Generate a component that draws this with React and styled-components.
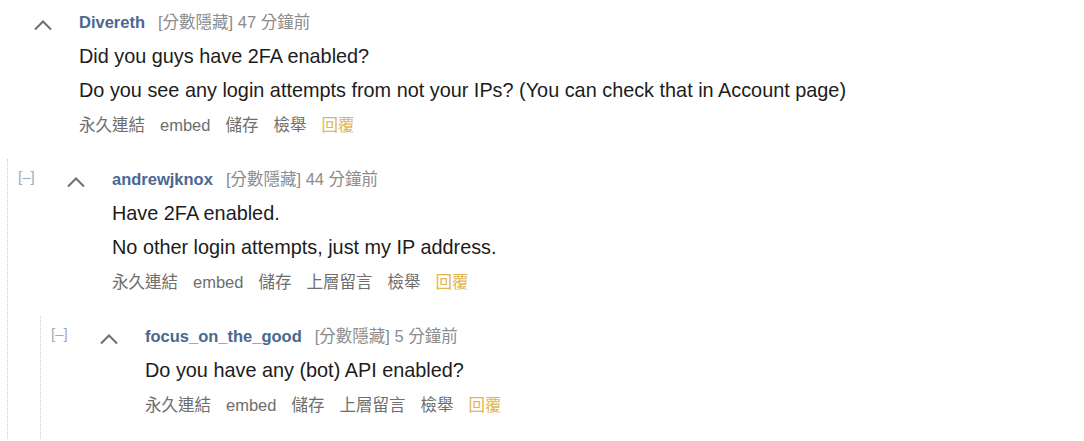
import React from "react";
import styled, { createGlobalStyle } from "styled-components";

const GlobalStyle = createGlobalStyle`
  html, body {
    margin: 0;
    padding: 0;
    background: #fff;
    overflow: hidden;
  }
  body {
    font-family: "Liberation Sans", "Noto Sans CJK TC", Arial, sans-serif;
  }
`;

const comments = [
  {
    id: 1,
    author: "Divereth",
    age: "47 分鐘前",
    body: [
      "Did you guys have 2FA enabled?",
      "Do you see any login attempts from not your IPs? (You can check that in Account page)",
    ],
    buttons: ["永久連結", "embed", "儲存", "檢舉"],
    replies: [
      {
        id: 2,
        author: "andrewjknox",
        age: "44 分鐘前",
        body: ["Have 2FA enabled.", "No other login attempts, just my IP address."],
        buttons: ["永久連結", "embed", "儲存", "上層留言", "檢舉"],
        replies: [
          {
            id: 3,
            author: "focus_on_the_good",
            age: "5 分鐘前",
            body: ["Do you have any (bot) API enabled?"],
            buttons: ["永久連結", "embed", "儲存", "上層留言", "檢舉"],
            replies: [],
          },
        ],
      },
    ],
  },
];

const Comment = ({ comment, depth = 0 }) => (
  <CommentBox>
    <Row>
      <Toggle $hidden={depth === 0}>[–]</Toggle>
      <Vote>
        <svg width="20" height="12" viewBox="0 0 20 12">
          <path d="M2 10.5 L10 2.5 L18 10.5" fill="none" stroke="#6f6f6f" strokeWidth="2" />
        </svg>
      </Vote>
      <Entry>
        <Tagline>
          <Author>{comment.author}</Author>
          <Meta>[分數隱藏] {comment.age}</Meta>
        </Tagline>
        {comment.body.map((line) => (
          <Paragraph key={line}>{line}</Paragraph>
        ))}
        <Buttons>
          {comment.buttons.map((b) => (
            <ActionLink key={b}>{b}</ActionLink>
          ))}
          <ActionLink $reply>回覆</ActionLink>
        </Buttons>
      </Entry>
    </Row>
    {comment.replies.length > 0 && (
      <Children>
        {comment.replies.map((r) => (
          <Comment key={r.id} comment={r} depth={depth + 1} />
        ))}
      </Children>
    )}
  </CommentBox>
);

export default function App() {
  return (
    <>
      <GlobalStyle />
      <Thread>
        {comments.map((c) => (
          <Comment key={c.id} comment={c} />
        ))}
      </Thread>
    </>
  );
}

const Thread = styled.div`
  margin-left: -15px;
  padding-top: 2px;
`;

const CommentBox = styled.div`
  display: flex;
  flex-direction: column;
`;

const Row = styled.div`
  display: flex;
  padding-top: 3px;
  padding-bottom: 17px;
`;

const Toggle = styled.div`
  width: 47px;
  flex-shrink: 0;
  font-size: 15px;
  line-height: 30px;
  color: #9eabbd;
  visibility: ${(p) => (p.$hidden ? "hidden" : "visible")};
`;

const Vote = styled.div`
  width: 47px;
  flex-shrink: 0;
  padding-top: 12px;
  padding-left: 1px;
  box-sizing: border-box;
`;

const Entry = styled.div`
  display: flex;
  flex-direction: column;
`;

const Tagline = styled.div`
  display: flex;
  align-items: center;
  gap: 13px;
  height: 34px;
  font-size: 16.5px;
  line-height: 20px;
`;

const Author = styled.span`
  font-weight: bold;
  color: #4a6791;
`;

const Meta = styled.span`
  color: #8c8c8c;
`;

const Paragraph = styled.p`
  margin: 0;
  font-size: 19.85px;
  line-height: 34px;
  color: #1c1c1c;
`;

const Buttons = styled.div`
  display: flex;
  gap: 15px;
  height: 35px;
  align-items: center;
  font-size: 16.5px;
  line-height: 20px;
`;

const ActionLink = styled.span`
  color: ${(p) => (p.$reply ? "#e2b654" : "#6e6e6e")};
`;

const Children = styled.div`
  margin-left: 22px;
  padding-left: 10px;
  border-left: 1px dotted #cfcfcf;
`;
